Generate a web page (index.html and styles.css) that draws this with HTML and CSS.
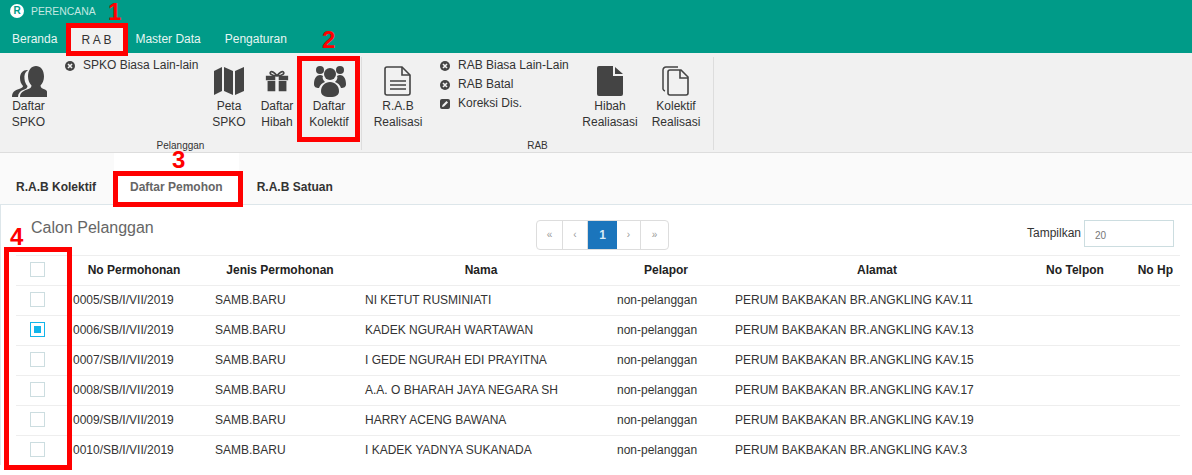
FILE: index.html
```html
<!DOCTYPE html>
<html lang="en">

<head>
    <meta charset="UTF-8">
    <meta name="viewport" content="width=device-width, initial-scale=1.0">
    <title>Perencana</title>
    <link rel="stylesheet" href="styles.css">
</head>

<body>
    <header class="topbar">
        <div class="brand">
            <span class="logo">R</span>
            <span class="brand-name">PERENCANA</span>
        </div>
        <nav class="menu">
            <a class="menu-item">Beranda</a>
            <a class="menu-item active">R A B</a>
            <a class="menu-item">Master Data</a>
            <a class="menu-item">Pengaturan</a>
        </nav>
    </header>

    <section class="ribbon">
        <div class="group group-one">
            <div class="group-items">
                <a class="tool tool-spko">
                    <svg class="tool-icon" width="36" height="34" viewBox="0 0 36 34">
                        <path d="M1 33c0-5 3-7 7-8 3-1 4-2 4-3-2-2-3-5-3-8 0-5 3-8 7-8l1 .2C14 8 13 11 13.500 15c.3 3 1.500 5.500 3 7 0 2-1.500 3-4.500 4-3 1.200-5 3.500-5 7z" fill="#444" />
                        <path d="M9 33c0-4 3-6 7-7.500 3-1 4.500-2 4.500-4-2-2-3.500-5-3.500-9C17 6 20.500 2 25 2s8 4 8 10.500c0 4-1.500 7-3.500 9 0 2 1.500 3 4.500 4 1 .5 2 1 2 2.500v5z" fill="#444" />
                    </svg>
                    <span>Daftar<br>SPKO</span>
                </a>
                <ul class="links links-one">
                    <li><svg class="link-icon" viewBox="0 0 12 12"><circle cx="6" cy="6" r="5" fill="#444" /><path d="M4 4l4 4M8 4l-4 4" stroke="#f1f1f1" stroke-width="1.600" /></svg>SPKO Biasa Lain-lain</li>
                </ul>
                <a class="tool tool-peta">
                    <svg class="tool-icon" width="32" height="30" viewBox="0 0 32 30">
                        <path d="M1 5l8-4v24l-8 4zM11 1l9 4v24l-9-4zM22 5l9-4v24l-9 4z" fill="#444" />
                    </svg>
                    <span>Peta<br>SPKO</span>
                </a>
                <a class="tool tool-hibah">
                    <svg class="tool-icon" width="24" height="24" viewBox="0 0 28 26">
                        <path d="M1 7h11v5H1zM16 7h11v5H16zM3 13h9v12H3zM16 13h9v12H16z" fill="#444" />
                        <path d="M14 7C11 3 8 1 6.500 2.500 5 4 7 7 14 7zM14 7c3-4 6-6 7.500-4.500C23 4 21 7 14 7z" fill="none" stroke="#444" stroke-width="2" />
                    </svg>
                    <span>Daftar<br>Hibah</span>
                </a>
                <a class="tool tool-kolektif">
                    <svg class="tool-icon icon-group" width="34" height="32" viewBox="0 0 34 32">
                        <circle cx="7" cy="5" r="4" fill="#444" />
                        <circle cx="27" cy="5" r="4" fill="#444" />
                        <circle cx="17" cy="9" r="6" fill="#444" />
                        <path d="M1 19c0-6 3-9 6-9 1 0 2 .3 3 1-1 2 0 4 2 6-3 1-5 3-6 6-3 0-5-1-5-4zM33 19c0-6-3-9-6-9-1 0-2 .3-3 1 1 2 0 4-2 6 3 1 5 3 6 6 3 0 5-1 5-4z" fill="#444" />
                        <path d="M8 26c0-5 4-9 9-9s9 4 9 9c0 4-3 6-9 6s-9-2-9-6z" fill="#444" />
                    </svg>
                    <span>Daftar<br>Kolektif</span>
                </a>
            </div>
            <div class="group-label">Pelanggan</div>
        </div>

        <div class="group group-two">
            <div class="group-items">
                <a class="tool tool-realisasi">
                    <svg class="tool-icon" width="28" height="30" viewBox="0 0 28 30">
                        <path d="M3 1h15l8 8v18a2 2 0 0 1-2 2H3a2 2 0 0 1-2-2V3a2 2 0 0 1 2-2z" fill="none" stroke="#444" stroke-width="1.600" />
                        <path d="M18 1v8h8" fill="none" stroke="#444" stroke-width="1.600" />
                        <path d="M6 15h16M6 19h16M6 23h16" stroke="#444" stroke-width="1.500" />
                    </svg>
                    <span>R.A.B<br>Realisasi</span>
                </a>
                <ul class="links links-two">
                    <li><svg class="link-icon" viewBox="0 0 12 12"><circle cx="6" cy="6" r="5" fill="#444" /><path d="M4 4l4 4M8 4l-4 4" stroke="#f1f1f1" stroke-width="1.600" /></svg>RAB Biasa Lain-Lain</li>
                    <li><svg class="link-icon" viewBox="0 0 12 12"><circle cx="6" cy="6" r="5" fill="#444" /><path d="M4 4l4 4M8 4l-4 4" stroke="#f1f1f1" stroke-width="1.600" /></svg>RAB Batal</li>
                    <li><svg class="link-icon" viewBox="0 0 12 12"><rect x="1" y="1" width="10" height="10" rx="2" fill="#444" /><path d="M3 9l.5-2L7.500 3l1.500 1.500-4 4z" fill="#f1f1f1" /></svg>Koreksi Dis.</li>
                </ul>
                <a class="tool tool-hibah-real">
                    <svg class="tool-icon" width="26" height="30" viewBox="0 0 26 30">
                        <path d="M2 0h14v10h10v18a2 2 0 0 1-2 2H2a2 2 0 0 1-2-2V2a2 2 0 0 1 2-2zM18 1l8 7h-8z" fill="#444" />
                    </svg>
                    <span>Hibah<br>Realiasasi</span>
                </a>
                <a class="tool tool-kolektif-real">
                    <svg class="tool-icon" width="28" height="30" viewBox="0 0 28 30">
                        <path d="M16 1H4a3 3 0 0 0-3 3v19a3 3 0 0 0 2 2" fill="none" stroke="#444" stroke-width="1.500" />
                        <path d="M8 4h11l7 7v16a2 2 0 0 1-2 2H8a2 2 0 0 1-2-2V6a2 2 0 0 1 2-2z" fill="none" stroke="#444" stroke-width="1.600" />
                        <path d="M18 4v8h8" fill="none" stroke="#444" stroke-width="1.600" />
                    </svg>
                    <span>Kolektif<br>Realisasi</span>
                </a>
            </div>
            <div class="group-label">RAB</div>
        </div>
    </section>

    <div class="tabs">
        <a class="tab">R.A.B Kolektif</a>
        <a class="tab tab-active">Daftar Pemohon</a>
        <a class="tab">R.A.B Satuan</a>
    </div>

    <main class="content">
        <div class="toolbar">
            <h2 class="title">Calon Pelanggan</h2>
            <div class="pager">
                <a class="page-link">«</a>
                <a class="page-link">‹</a>
                <a class="page-link current">1</a>
                <a class="page-link">›</a>
                <a class="page-link">»</a>
            </div>
            <label class="show">Tampilkan <input class="show-input" type="text" value="20"></label>
        </div>

        <table class="grid">
            <colgroup>
                <col class="c-check">
                <col class="c-no">
                <col class="c-jenis">
                <col class="c-nama">
                <col class="c-pelapor">
                <col class="c-alamat">
                <col class="c-telp">
                <col class="c-hp">
            </colgroup>
            <thead>
                <tr>
                    <th class="cell-check"><input class="check" type="checkbox"></th>
                    <th>No Permohonan</th>
                    <th>Jenis Permohonan</th>
                    <th>Nama</th>
                    <th>Pelapor</th>
                    <th>Alamat</th>
                    <th>No Telpon</th>
                    <th class="cell-hp">No Hp</th>
                </tr>
            </thead>
            <tbody>
                <tr>
                    <td class="cell-check"><input class="check" type="checkbox"></td>
                    <td class="cell-no">0005/SB/I/VII/2019</td>
                    <td class="cell-wide">SAMB.BARU</td>
                    <td>NI KETUT RUSMINIATI</td>
                    <td class="cell-wide">non-pelanggan</td>
                    <td>PERUM BAKBAKAN BR.ANGKLING KAV.11</td>
                    <td></td>
                    <td></td>
                </tr>
                <tr>
                    <td class="cell-check"><input class="check" type="checkbox" checked></td>
                    <td class="cell-no">0006/SB/I/VII/2019</td>
                    <td class="cell-wide">SAMB.BARU</td>
                    <td>KADEK NGURAH WARTAWAN</td>
                    <td class="cell-wide">non-pelanggan</td>
                    <td>PERUM BAKBAKAN BR.ANGKLING KAV.13</td>
                    <td></td>
                    <td></td>
                </tr>
                <tr>
                    <td class="cell-check"><input class="check" type="checkbox"></td>
                    <td class="cell-no">0007/SB/I/VII/2019</td>
                    <td class="cell-wide">SAMB.BARU</td>
                    <td>I GEDE NGURAH EDI PRAYITNA</td>
                    <td class="cell-wide">non-pelanggan</td>
                    <td>PERUM BAKBAKAN BR.ANGKLING KAV.15</td>
                    <td></td>
                    <td></td>
                </tr>
                <tr>
                    <td class="cell-check"><input class="check" type="checkbox"></td>
                    <td class="cell-no">0008/SB/I/VII/2019</td>
                    <td class="cell-wide">SAMB.BARU</td>
                    <td>A.A. O BHARAH JAYA NEGARA SH</td>
                    <td class="cell-wide">non-pelanggan</td>
                    <td>PERUM BAKBAKAN BR.ANGKLING KAV.17</td>
                    <td></td>
                    <td></td>
                </tr>
                <tr>
                    <td class="cell-check"><input class="check" type="checkbox"></td>
                    <td class="cell-no">0009/SB/I/VII/2019</td>
                    <td class="cell-wide">SAMB.BARU</td>
                    <td>HARRY ACENG BAWANA</td>
                    <td class="cell-wide">non-pelanggan</td>
                    <td>PERUM BAKBAKAN BR.ANGKLING KAV.19</td>
                    <td></td>
                    <td></td>
                </tr>
                <tr>
                    <td class="cell-check"><input class="check" type="checkbox"></td>
                    <td class="cell-no">0010/SB/I/VII/2019</td>
                    <td class="cell-wide">SAMB.BARU</td>
                    <td>I KADEK YADNYA SUKANADA</td>
                    <td class="cell-wide">non-pelanggan</td>
                    <td>PERUM BAKBAKAN BR.ANGKLING KAV.3</td>
                    <td></td>
                    <td></td>
                </tr>
            </tbody>
        </table>
    </main>

    <!-- red markers drawn over the screenshot -->
    <div class="mark mark-1"></div>
    <div class="mark mark-2"></div>
    <div class="mark mark-3"></div>
    <div class="mark mark-4"></div>
    <span class="num num-1">1</span>
    <span class="num num-2">2</span>
    <span class="num num-3">3</span>
    <span class="num num-4">4</span>
</body>

</html>
```

FILE: styles.css
```css
body {
    font-family: "Liberation Sans", Arial, sans-serif;
    font-size: 12px;
    color: #333;
    background-color: #fff;
    margin: 0;
    position: relative;
    height: 475px;
    overflow: hidden;
}

.topbar {
    height: 53px;
    background-color: #009b88;
    color: #fff;
}

.brand {
    height: 22px;
    display: flex;
    align-items: center;
    padding-left: 10px;
}

.logo {
    width: 14px;
    height: 14px;
    border-radius: 50%;
    background-color: #fff;
    color: #009b88;
    font-size: 10px;
    font-weight: bold;
    line-height: 14px;
    text-align: center;
}

.brand-name {
    margin-left: 7px;
    font-size: 10.400px;
    color: #c4e8e2;
}

.menu {
    display: flex;
    height: 26px;
    margin-top: 5px;
}

.menu-item {
    padding: 0 12px;
    line-height: 25px;
    color: #e6f6f3;
}

.menu-item.active {
    margin-left: 2px;
    padding: 0 12px 0 10px;
    background-color: #f1f1f1;
    color: #333;
    line-height: 26px;
}

.ribbon {
    display: flex;
    height: 99px;
    background-color: #f1f1f1;
    border-bottom: 1px solid #ddd;
}

.group {
    display: flex;
    flex-direction: column;
    margin-top: 4px;
    height: 93px;
    border-right: 1px solid #ddd;
}

.group-one {
    width: 361px;
}

.group-two {
    width: 351px;
}

.group-items {
    display: flex;
    flex: 1;
}

.group-label {
    font-size: 10px;
    line-height: 11px;
    text-align: center;
    color: #333;
    margin-bottom: -1px;
}

.tool {
    display: flex;
    flex-direction: column;
    align-items: center;
    text-align: center;
    line-height: 16px;
    color: #333;
}

.tool-icon {
    height: 34px;
    margin-top: 7px;
    flex: none;
}

.icon-group {
    margin-left: 2px;
}

.tool-spko {
    width: 57px;
}

.tool-peta {
    width: 48px;
}

.tool-hibah {
    width: 48px;
}

.tool-kolektif {
    width: 56px;
}

.tool-realisasi {
    width: 72px;
}

.tool-hibah-real {
    width: 60px;
}

.tool-kolektif-real {
    width: 60px;
    margin-left: 6px;
}

.links {
    list-style: none;
    margin: -1px 0 0;
    padding: 0;
}

.links li {
    display: flex;
    align-items: center;
    line-height: 19px;
    white-space: nowrap;
}

.links-one {
    width: 141px;
    padding-left: 7px;
}

.links-two {
    width: 141px;
    padding-left: 5px;
}

.link-icon {
    width: 12px;
    height: 12px;
    margin-right: 7px;
    flex: none;
}

.tabs {
    display: flex;
    height: 51px;
    background-color: #fafafa;
    border-bottom: 1px solid #dde6ea;
}

.tab {
    font-weight: bold;
    line-height: 15px;
    padding: 27px 16px 0;
    color: #333;
}

.tab-active {
    margin: 0 2px;
    background-color: #fff;
    color: #666;
}

.content {
    border-left: 1px solid #dde6ea;
    padding-left: 15px;
    background-color: #fff;
}

.toolbar {
    display: flex;
    height: 50px;
}

.title {
    margin: 14px 0 0 15px;
    width: 505px;
    font-size: 16px;
    font-weight: normal;
    color: #666;
}

.pager {
    display: flex;
    align-self: flex-start;
    height: 30px;
    margin-top: 15px;
    border: 1px solid #ddd;
    border-radius: 4px;
    box-sizing: border-box;
    overflow: hidden;
}

.page-link {
    box-sizing: border-box;
    width: 25px;
    line-height: 28px;
    text-align: center;
    font-size: 10px;
    color: #999;
    border-right: 1px solid #ddd;
}

.page-link:first-child {
    width: 26px;
}

.page-link:nth-child(4) {
    width: 24px;
}

.page-link:last-child {
    border-right: none;
    width: 27px;
}

.page-link.current {
    width: 29px;
    background-color: #1b75bc;
    color: #d8ebf7;
    border-right: none;
    font-size: 12px;
    font-weight: bold;
}

.show {
    margin-left: auto;
    margin-right: 18px;
    margin-top: 15px;
    display: flex;
    align-items: flex-start;
    gap: 3px;
    line-height: 27px;
}

.show-input {
    width: 90px;
    height: 27px;
    box-sizing: border-box;
    border: 1px solid #ccdde0;
    padding: 3px 10px 0;
    font-family: inherit;
    font-size: 10px;
    color: #777;
}

.grid {
    width: 1164px;
    table-layout: fixed;
    border-collapse: collapse;
}

.c-check {
    width: 52px;
}

.c-no {
    width: 132px;
}

.c-jenis {
    width: 160px;
}

.c-nama {
    width: 242px;
}

.c-pelapor {
    width: 128px;
}

.c-alamat {
    width: 294px;
}

.c-telp {
    width: 102px;
}

.c-hp {
    width: 54px;
}

.grid th,
.grid td {
    height: 27px;
    padding: 0 0 2px 5px;
    border-top: 1px solid #eee;
    overflow: hidden;
    white-space: nowrap;
}

.grid th {
    padding: 0 0 2px;
    color: #222;
}

.grid td {
    color: #333;
}

.grid .cell-check {
    padding-left: 14px;
    text-align: left;
}

.grid .cell-hp {
    text-align: right;
    padding-right: 7px;
}

.grid .cell-wide {
    padding-left: 15px;
}

.check {
    appearance: none;
    display: block;
    width: 15px;
    height: 15px;
    margin: 0;
    padding: 3px;
    box-sizing: border-box;
    border: 1px solid #ccdde0;
    background-color: #fff;
}

.check:checked {
    border-color: #12b5ea;
    background: #12b5ea content-box;
}

.mark {
    position: absolute;
    box-sizing: border-box;
    border: 5px solid #f00;
}

.mark-1 {
    left: 66px;
    top: 23px;
    width: 62px;
    height: 33px;
}

.mark-2 {
    left: 297px;
    top: 56px;
    width: 63px;
    height: 86px;
}

.mark-3 {
    left: 113px;
    top: 171px;
    width: 130px;
    height: 36px;
}

.mark-4 {
    left: 4px;
    top: 247px;
    width: 68px;
    height: 223px;
}

.num {
    position: absolute;
    font-size: 24px;
    font-weight: bold;
    line-height: 18px;
    color: #f00;
}

.num-1 {
    left: 108px;
    top: 3px;
}

.num-2 {
    left: 322px;
    top: 31px;
}

.num-3 {
    left: 172px;
    top: 151px;
}

.num-4 {
    left: 10px;
    top: 228px;
}
```
